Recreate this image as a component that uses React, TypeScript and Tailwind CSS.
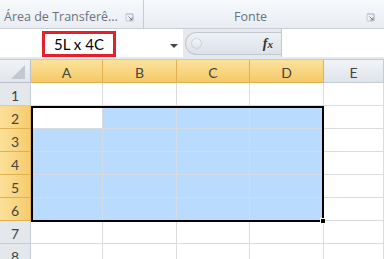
import React from "react";

const COLS = ["A", "B", "C", "D", "E"];
const ROWS = [1, 2, 3, 4, 5, 6, 7, 8];

// selected range A2:D6, active cell A2
const isSelCol = (c: number) => c < 4;
const isSelRow = (r: number) => r >= 2 && r <= 6;

function Launcher() {
  return (
    <svg width={9} height={9} viewBox="0 0 9 9" className="shrink-0">
      <path d="M1 1 H8 V8" fill="none" stroke="#a6adb6" strokeWidth={1} />
      <path d="M1 1 V8 H8" fill="none" stroke="#c4cad2" strokeWidth={1} />
      <path d="M3.5 3.5 L7 7 M7 4.5 V7 H4.5" fill="none" stroke="#7d8590" strokeWidth={1} />
    </svg>
  );
}

export default function App() {
  return (
    <div className="relative h-[259px] w-[384px] overflow-hidden bg-white font-['Lato','Open_Sans',sans-serif] text-[#333]">
      {/* Ribbon group labels */}
      <div className="flex h-[29px] border-b border-[#c9ced6] bg-gradient-to-b from-[#f7f9fc] to-[#e9edf2] font-['Open_Sans','Noto_Sans',sans-serif] text-[12.5px] text-[#6a737e]">
        <div className="flex w-[144px] items-center border-r border-[#c6ccd4] pl-[4px] pr-[9px] pt-[6px]">
          <span className="flex-1 whitespace-nowrap">Área de Transferê...</span>
          <Launcher />
        </div>
        <div className="flex flex-1 items-center pr-[9px] pt-[6px]">
          <span className="flex-1 pl-[90px]">Fonte</span>
          <Launcher />
        </div>
      </div>

      {/* Name box + formula bar */}
      <div className="flex h-[31px] items-start border-b border-[#c3c9d1] bg-[#e6eaef]">
        <div className="flex h-[28px] w-[183px] items-end bg-white">
          <div className="ml-[42px] flex h-[26px] w-[74px] items-center justify-center border-[3px] border-[#e3202b] text-[15px] text-black">
            5L x 4C
          </div>
          <div className="mb-[9px] ml-[54px] h-0 w-0 border-x-[4px] border-t-[4px] border-x-transparent border-t-[#444]" />
        </div>
        <div className="ml-[2px] mt-[3px] flex h-[23px] w-[96px] items-center rounded-l-full border border-r-0 border-[#c2c8d0] bg-gradient-to-b from-[#eef1f4] to-[#dde2e8]">
          <div className="ml-[5px] h-[11px] w-[11px] rounded-full border border-[#cdd2d8] bg-gradient-to-b from-[#f4f6f8] to-[#dfe3e8]" />
          <span className="ml-auto mr-[8px] font-['Liberation_Serif',serif] text-[14px] font-bold italic text-[#333]">
            f<span className="text-[11px]">x</span>
          </span>
        </div>
        <div className="h-[28px] flex-1 border-l border-[#c2c8d0] bg-white" />
      </div>

      {/* Sheet grid */}
      <div className="relative">
        <div className="grid grid-cols-[31px_72px_74px_73px_74px_1fr] grid-rows-[23px] auto-rows-[23px]">
          {/* corner */}
          <div className="relative border-b border-r border-[#b9c1cb] bg-gradient-to-b from-[#f1f3f6] to-[#e0e5eb]">
            <div className="absolute bottom-[3px] right-[5px] h-0 w-0 border-b-[14px] border-l-[14px] border-b-[#c3c8cf] border-l-transparent" />
          </div>
          {COLS.map((c, i) => (
            <div
              key={c}
              className={
                isSelCol(i)
                  ? "flex items-center justify-center border-b border-r border-[#e0b154] bg-gradient-to-b from-[#fbe39b] to-[#f5c965] pt-[2px] text-[14px] text-[#444]"
                  : "flex items-center justify-center border-b border-r border-[#c4ccd6] bg-gradient-to-b from-[#f1f4f7] to-[#dfe4ea] pt-[2px] text-[14px] text-[#444]"
              }
            >
              {c}
            </div>
          ))}
          {ROWS.map((r) => (
            <React.Fragment key={r}>
              <div
                className={
                  isSelRow(r)
                    ? "flex items-center justify-center border-b border-r border-[#e0b154] bg-gradient-to-r from-[#fbe09a] to-[#f6cc6c] pt-[2px] text-[14px] text-[#444]"
                    : "flex items-center justify-center border-b border-r border-[#c4ccd6] bg-[#e4e8ed] pt-[2px] text-[14px] text-[#444]"
                }
              >
                {r}
              </div>
              {COLS.map((c, i) => {
                const sel = isSelCol(i) && isSelRow(r);
                const active = r === 2 && i === 0;
                return (
                  <div
                    key={c}
                    className={
                      sel && !active
                        ? "border-b border-r border-[#d4dde6] bg-[#b9dbfd]"
                        : "border-b border-r border-[#dadcdf] bg-white"
                    }
                  />
                );
              })}
            </React.Fragment>
          ))}
        </div>

        {/* selection outline and fill handle */}
        <div className="pointer-events-none absolute left-[31px] top-[46px] h-[116px] w-[293px] border-[2.5px] border-black" />
        <div className="pointer-events-none absolute left-[320px] top-[158px] h-[6px] w-[6px] border border-white bg-black" />
      </div>
    </div>
  );
}
